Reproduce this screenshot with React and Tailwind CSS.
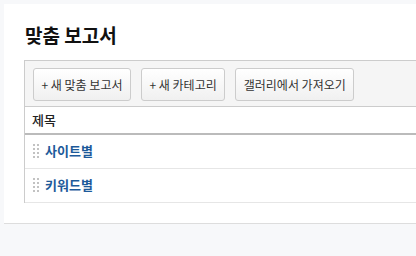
const FONT = { fontFamily: '"Noto Sans CJK KR", "Noto Sans", sans-serif' };

const BOTONES = ['+ 새 맞춤 보고서', '+ 새 카테고리', '갤러리에서 가져오기'];
const FILAS = ['사이트별', '키워드별'];

function Asa() {
  // manija de arrastre: 2 columnas x 4 filas de puntos
  return (
    <span className="grid grid-cols-2 gap-[2px]">
      {[0, 1, 2, 3, 4, 5, 6, 7].map((i) => (
        <span key={i} className="h-[2px] w-[2px] bg-[#c2c2c2]" />
      ))}
    </span>
  );
}

export default function App() {
  return (
    <div className="h-screen w-full overflow-hidden bg-[#f7f8fa] pl-[4px] pt-[4px]" style={FONT}>
      <div className="border-b border-[#dddddd] bg-white pb-[20px] pl-[20px] pt-[18px]">
        <h1 className="mb-[12px] h-[26px] pl-[1px] text-[19px] font-bold leading-[26px] text-[#111]">
          맞춤 보고서
        </h1>

        <div className="flex h-[47px] items-start gap-[10px] border border-r-0 border-[#cccccc] bg-[#f5f5f5] pl-[8px] pt-[7px]">
          {BOTONES.map((b) => (
            <button
              key={b}
              className="h-[33px] rounded-[3px] border border-[#cccccc] bg-gradient-to-b from-white to-[#f0f0f0] px-[7.5px] text-[12px] text-[#333]"
            >
              {b}
            </button>
          ))}
        </div>

        <div className="border-l border-[#cccccc]">
          <div className="flex h-[28px] items-center border-b-2 border-[#bbbbbb] pb-[1px] pl-[7px] text-[13px] font-medium text-[#222]">
            제목
          </div>
          {FILAS.map((f) => (
            <div
              key={f}
              className="flex h-[34px] items-center gap-[6px] border-b border-[#e6e6e6] pb-[2px] pl-[8px] text-[13px] font-bold text-[#1d5a9a]"
            >
              <Asa />
              <span>{f}</span>
            </div>
          ))}
        </div>
      </div>
    </div>
  );
}
